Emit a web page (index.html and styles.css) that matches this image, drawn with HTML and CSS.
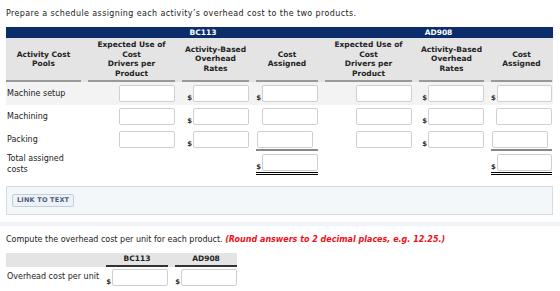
FILE: index.html
```html
<!DOCTYPE html>
<html>
<head>
<meta charset="utf-8">
<link rel="stylesheet" href="styles.css">
</head>
<body>
<div class="page">
  <p class="prompt first">Prepare a schedule assigning each activity’s overhead cost to the two products.</p>
  <div class="sched">
    <div class="row navy">
      <div></div>
      <div class="span3">BC113</div>
      <div class="span3">AD908</div>
    </div>
    <div class="row head">
      <div class="th">Activity Cost<br>Pools</div>
      <div class="th">Expected Use of<br>Cost<br>Drivers per<br>Product</div>
      <div class="th">Activity-Based<br>Overhead<br>Rates</div>
      <div class="th">Cost<br>Assigned</div>
      <div class="th">Expected Use of<br>Cost<br>Drivers per<br>Product</div>
      <div class="th">Activity-Based<br>Overhead<br>Rates</div>
      <div class="th">Cost<br>Assigned</div>
    </div>
    <div class="row data alt">
      <div class="label">Machine setup</div>
      <div class="cell"><span class="inp"></span></div>
      <div class="cell"><span class="dol">$</span><span class="inp"></span></div>
      <div class="cell"><span class="dol">$</span><span class="inp"></span></div>
      <div class="cell"><span class="inp"></span></div>
      <div class="cell"><span class="dol">$</span><span class="inp"></span></div>
      <div class="cell"><span class="dol">$</span><span class="inp"></span></div>
    </div>
    <div class="row data">
      <div class="label">Machining</div>
      <div class="cell"><span class="inp"></span></div>
      <div class="cell"><span class="dol">$</span><span class="inp"></span></div>
      <div class="cell"><span class="inp"></span></div>
      <div class="cell"><span class="inp"></span></div>
      <div class="cell"><span class="dol">$</span><span class="inp"></span></div>
      <div class="cell"><span class="inp"></span></div>
    </div>
    <div class="row data">
      <div class="label">Packing</div>
      <div class="cell"><span class="inp"></span></div>
      <div class="cell"><span class="dol">$</span><span class="inp"></span></div>
      <div class="cell sub"><span class="inp"></span></div>
      <div class="cell"><span class="inp"></span></div>
      <div class="cell"><span class="dol">$</span><span class="inp"></span></div>
      <div class="cell sub"><span class="inp"></span></div>
    </div>
    <div class="row data total">
      <div class="label">Total assigned<br>costs</div>
      <div class="cell"></div>
      <div class="cell"></div>
      <div class="cell tot"><span class="dol">$</span><span class="inp"></span></div>
      <div class="cell"></div>
      <div class="cell"></div>
      <div class="cell tot"><span class="dol">$</span><span class="inp"></span></div>
    </div>
  </div>
  <div class="linkbox"><span class="btn">LINK TO TEXT</span></div>
</div>
<div class="band"></div>
<div class="page">
  <p class="prompt second">Compute the overhead cost per unit for each product. <span class="red">(Round answers to 2 decimal places, e.g. 12.25.)</span></p>
  <div class="mini">
    <div class="mrow mhead">
      <div></div>
      <div class="mth">BC113</div>
      <div class="mth">AD908</div>
    </div>
    <div class="mrow">
      <div class="label">Overhead cost per unit</div>
      <div class="cell"><span class="dol">$</span><span class="inp"></span></div>
      <div class="cell"><span class="dol">$</span><span class="inp"></span></div>
    </div>
  </div>
</div>
</body>
</html>
```

FILE: styles.css
```css
html, body {
  margin: 0;
  padding: 0;
  background: #fff;
}
body {
  font-family: "DejaVu Sans", Verdana, sans-serif;
  font-size: 8px;
  color: #222;
}
.page {
  padding: 0 7px 0 6px;
}
.prompt {
  margin: 0;
  padding-top: 9px;
  line-height: 10px;
  height: 18px;
}
.prompt.first {
  letter-spacing: 0.38px;
}
.sched {
  width: 547px;
}
.row {
  display: grid;
  grid-template-columns: 75px 87px 67px 62px 87px 65px 61px;
  column-gap: 7px;
}
.navy {
  background: #0b2e6b;
  color: #fff;
  font-weight: bold;
  font-size: 7.5px;
  height: 11px;
  line-height: 11px;
}
.span3 {
  grid-column: span 3;
  text-align: center;
}
.head {
  background: #e4e4e4;
}
.th {
  font-weight: bold;
  font-size: 7.5px;
  line-height: 9.5px;
  text-align: center;
  height: 42px;
  display: flex;
  align-items: center;
  justify-content: center;
  border-bottom: 2px solid #999;
}
.data {
  height: 23px;
}
.data.alt {
  background: #f3f3f3;
}
.data.total {
  height: 25px;
}
.label {
  align-self: center;
  padding-left: 1px;
  line-height: 11px;
  white-space: nowrap;
}
.cell {
  display: flex;
  justify-content: flex-end;
  align-items: flex-end;
  align-self: start;
  margin-top: 3px;
  gap: 1px;
}
.cell.sub {
  justify-content: flex-start;
  padding-left: 1px;
  padding-bottom: 1px;
  border-bottom: 2px solid #888;
}
.cell.tot {
  padding-bottom: 1px;
  border-bottom: 3px double #000;
}
.inp {
  display: block;
  width: 54px;
  height: 15px;
  border: 1px solid #cfcfcf;
  border-radius: 2px;
  background: #fff;
}
.dol {
  font-size: 7px;
  font-weight: bold;
  line-height: 8px;
  color: #333;
}
.linkbox {
  margin-top: 10px;
  box-sizing: border-box;
  width: 547px;
  height: 29px;
  background: #f4f7fa;
  border: 1px solid #d5dbe4;
  display: flex;
  align-items: center;
  padding-left: 5px;
}
.btn {
  display: inline-block;
  font-size: 6.5px;
  font-weight: bold;
  color: #4b5d80;
  background: #eef2f7;
  border: 1px solid #c3cedd;
  border-radius: 2px;
  padding: 0 4px;
  height: 11px;
  line-height: 11px;
  letter-spacing: 0.2px;
}
.band {
  margin-top: 7px;
  height: 4px;
  background: #f1f4f8;
}
.prompt.second {
  padding-top: 9px;
  height: 17px;
}
.red {
  color: #f01020;
  font-weight: bold;
  font-style: italic;
}
.mini {
  width: 231px;
  margin-top: 1px;
}
.mrow {
  display: grid;
  grid-template-columns: 93px 62px 62px;
  column-gap: 7px;
}
.mhead {
  background: #e4e4e4;
}
.mth {
  font-weight: bold;
  font-size: 7.5px;
  height: 12px;
  line-height: 12px;
  text-align: center;
  border-bottom: 2px solid #333;
}
.mrow .cell {
  margin-top: 2px;
}
```
